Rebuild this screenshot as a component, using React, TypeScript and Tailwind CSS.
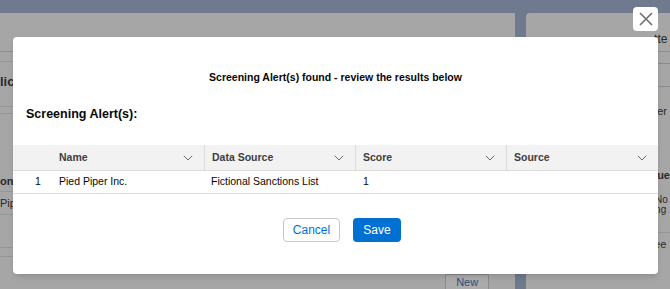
import React from "react";

const columns = [
  { label: "Name", width: "w-[191px]", pl: "pl-[46px]" },
  { label: "Data Source", width: "w-[151px]", pl: "pl-[7px]" },
  { label: "Score", width: "w-[151px]", pl: "pl-[7px]" },
  { label: "Source", width: "w-[152px]", pl: "pl-[7px]" },
];

function Chevron() {
  return (
    <svg width="10" height="6" viewBox="0 0 10 6" className="shrink-0">
      <path d="M0.8 0.8 L5 5 L9.2 0.8" fill="none" stroke="#706e6b" strokeWidth="1" />
    </svg>
  );
}

function Background() {
  return (
    <div className="flex flex-col h-full">
      <div className="h-[5px] bg-[#a4a4a4]" />
      <div className="flex flex-1 bg-[#6f7a8e] pt-[13px]">
        {/* left card */}
        <div className="w-[519px] bg-[#a6a6a6] flex flex-col text-[#2a2a2a]">
          <div className="h-[39px] border-b border-[#8f8f8f]" />
          <div className="h-[10px] border-b border-[#959595]" />
          <div className="h-[38px] flex items-center">
            <span className="text-[13px] font-bold leading-none">lic</span>
          </div>
          <div className="h-[7px] border-b border-[#959595]" />
          <div className="h-[7px] border-b border-[#959595]" />
          <div className="h-[57px]" />
          <div className="h-[21px] flex items-center border-b border-[#959595]">
            <span className="text-[11px] font-bold leading-none">on</span>
          </div>
          <div className="h-[23px] flex items-center border-b border-[#959595]">
            <span className="text-[11px] leading-none">Pip</span>
          </div>
          <div className="h-[33px] border-b border-[#959595]" />
          <div className="h-[9px] border-b border-[#959595]" />
          <div className="flex justify-end pr-[26px] pt-[17px]">
            <div className="w-[44px] h-[20px] border border-[#8a8a8a] bg-[#ababab] flex justify-center pt-[2px] text-[11px] leading-[11px] text-[#2b4f7a]">
              New
            </div>
          </div>
        </div>
        <div className="w-[11px]" />
        {/* right card */}
        <div className="flex-1 bg-[#a6a6a6] rounded-tl-[4px] flex flex-col text-[#2a2a2a]">
          <div className="h-[39px] border-b border-[#8f8f8f] flex items-end pb-[6px]">
            <span className="text-[12px] leading-none ml-[128px]">tte</span>
          </div>
          <div className="h-[11px]" />
          <div className="h-[24px] ml-[128px] border border-r-0 border-[#8a8a8a]" />
          <div className="h-[30px] flex items-end">
            <span className="text-[11px] leading-none ml-[128px]">ter</span>
          </div>
          <div className="h-[50px]" />
          <div className="h-[16px] flex items-center">
            <span className="text-[11px] font-bold leading-none ml-[128px]">lue</span>
          </div>
          <div className="h-[12px]" />
          <div className="flex flex-col text-[10px] leading-[10px] ml-[129px] pb-[17px] border-b border-[#959595]">
            <span>No</span>
            <span>ng</span>
          </div>
          <div className="h-[17px] flex items-end">
            <span className="text-[11px] leading-none ml-[128px]">ee</span>
          </div>
        </div>
      </div>
    </div>
  );
}

export default function App() {
  return (
    <div
      className="relative w-[670px] h-[289px] overflow-hidden bg-[#a4a4a4]"
      style={{ fontFamily: "'Liberation Sans', Arial, sans-serif" }}
    >
      <Background />

      <button className="absolute left-[633px] top-[7px] w-[25px] h-[24px] bg-white rounded-[4px] flex items-center justify-center">
        <svg width="14" height="14" viewBox="0 0 14 14">
          <path d="M1 1 L13 13 M13 1 L1 13" stroke="#706e6b" strokeWidth="1.6" />
        </svg>
      </button>

      <div className="absolute left-[13px] top-[37px] w-[645px] h-[237px] bg-white rounded-[4px] shadow-md flex flex-col">
        <div className="pt-[33px] text-center text-[10.5px] leading-[14px] font-bold text-[#080707]">
          Screening Alert(s) found - review the results below
        </div>
        <div className="pl-[13px] pt-[22px] text-[12.5px] leading-[16px] font-bold text-[#080707]">
          Screening Alert(s):
        </div>
        <div className="mt-[23px]">
          <div className="flex h-[26px] bg-[#f3f2f2] border-b border-[#dddbda]">
            {columns.map((c, i) => (
              <div
                key={c.label}
                className={`${c.width} ${c.pl} ${i > 0 ? "border-l border-[#dddbda]" : ""} flex items-center justify-between pr-[11px] text-[10.5px] font-bold text-[#3e3e3c]`}
              >
                <span>{c.label}</span>
                <Chevron />
              </div>
            ))}
          </div>
          <div className="flex h-[23px] items-center border-b border-[#dddbda] text-[10.5px] text-[#080707]">
            <div className="w-[46px] pl-[22px]">1</div>
            <div className="w-[152px]">Pied Piper Inc.</div>
            <div className="w-[152px]">Fictional Sanctions List</div>
            <div className="w-[152px]">1</div>
          </div>
        </div>
        <div className="flex justify-center gap-[13px] mt-[24px] ml-[13px]">
          <button className="w-[57px] h-[24px] rounded-[4px] border border-[#c9c7c5] bg-white text-[12px] text-[#0070d2]">
            Cancel
          </button>
          <button className="w-[48px] h-[24px] rounded-[4px] bg-[#0070d2] text-[12px] text-white">
            Save
          </button>
        </div>
      </div>
    </div>
  );
}
